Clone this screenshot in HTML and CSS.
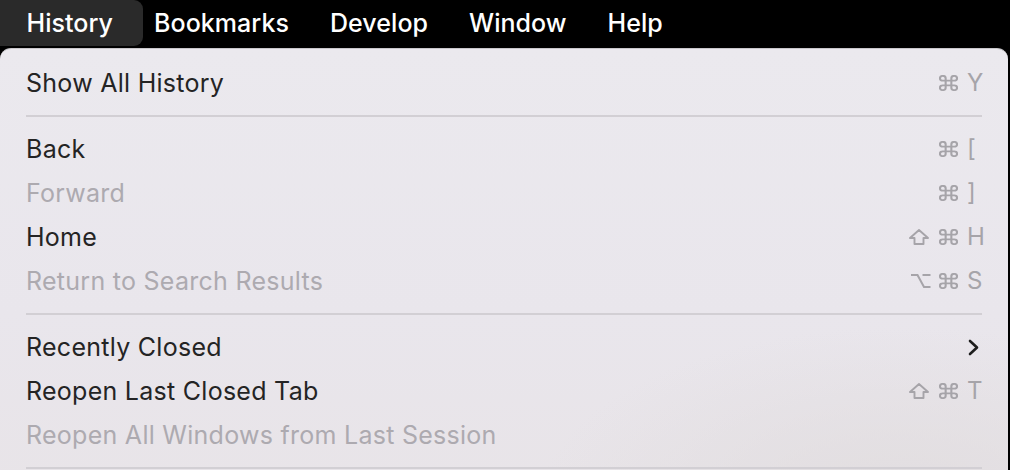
FILE: index.html
```html
<!DOCTYPE html>
<html lang="en">
<head>
<meta charset="utf-8">
<title>History menu</title>
<link rel="stylesheet" href="styles.css">
</head>
<body>
<header class="menubar">
  <span class="mb-item active">History</span>
  <span class="mb-item">Bookmarks</span>
  <span class="mb-item">Develop</span>
  <span class="mb-item">Window</span>
  <span class="mb-item">Help</span>
</header>
<div class="menu">
  <div class="row"><span class="label">Show All History</span>
    <span class="keys"><svg class="ic cmd" viewBox="2 2 20 20" preserveAspectRatio="none"><path d="M15 6v12a3 3 0 1 0 3-3H6a3 3 0 1 0 3 3V6a3 3 0 1 0-3 3h12a3 3 0 1 0-3-3"/></svg><span class="key">Y</span></span></div>
  <div class="sep"></div>
  <div class="row"><span class="label">Back</span>
    <span class="keys"><svg class="ic cmd" viewBox="2 2 20 20" preserveAspectRatio="none"><path d="M15 6v12a3 3 0 1 0 3-3H6a3 3 0 1 0 3 3V6a3 3 0 1 0-3 3h12a3 3 0 1 0-3-3"/></svg><span class="key">[</span></span></div>
  <div class="row disabled"><span class="label">Forward</span>
    <span class="keys"><svg class="ic cmd" viewBox="2 2 20 20" preserveAspectRatio="none"><path d="M15 6v12a3 3 0 1 0 3-3H6a3 3 0 1 0 3 3V6a3 3 0 1 0-3 3h12a3 3 0 1 0-3-3"/></svg><span class="key">]</span></span></div>
  <div class="row"><span class="label">Home</span>
    <span class="keys"><svg class="ic shift" viewBox="0 0 20 16"><path d="M10 1 1 9h4.5v6h9V9H19z"/></svg><svg class="ic cmd" viewBox="2 2 20 20" preserveAspectRatio="none"><path d="M15 6v12a3 3 0 1 0 3-3H6a3 3 0 1 0 3 3V6a3 3 0 1 0-3 3h12a3 3 0 1 0-3-3"/></svg><span class="key">H</span></span></div>
  <div class="row disabled"><span class="label">Return to Search Results</span>
    <span class="keys"><svg class="ic opt" viewBox="0 0 21 16"><path d="M1 2h6.5l6.5 12h6.5M12.5 2H20.5"/></svg><svg class="ic cmd" viewBox="2 2 20 20" preserveAspectRatio="none"><path d="M15 6v12a3 3 0 1 0 3-3H6a3 3 0 1 0 3 3V6a3 3 0 1 0-3 3h12a3 3 0 1 0-3-3"/></svg><span class="key">S</span></span></div>
  <div class="sep"></div>
  <div class="row"><span class="label">Recently Closed</span>
    <span class="keys"><svg class="chev" viewBox="0 0 11 17"><path d="M2 2l7 6.5-7 6.5"/></svg></span></div>
  <div class="row"><span class="label">Reopen Last Closed Tab</span>
    <span class="keys"><svg class="ic shift" viewBox="0 0 20 16"><path d="M10 1 1 9h4.5v6h9V9H19z"/></svg><svg class="ic cmd" viewBox="2 2 20 20" preserveAspectRatio="none"><path d="M15 6v12a3 3 0 1 0 3-3H6a3 3 0 1 0 3 3V6a3 3 0 1 0-3 3h12a3 3 0 1 0-3-3"/></svg><span class="key">T</span></span></div>
  <div class="row disabled"><span class="label">Reopen All Windows from Last Session</span></div>
  <div class="sep"></div>
</div>
</body>
</html>
```
FILE: styles.css
```css
* { box-sizing: border-box; }
html, body {
  margin: 0;
  height: 470px;
  overflow: hidden;
  background: #000;
  font-family: Inter, "Noto Sans", "Liberation Sans", sans-serif;
}
.menubar {
  height: 47px;
  display: flex;
  align-items: center;
  padding-left: 6px;
  background: #000;
  color: #fff;
  font-size: 25px;
  font-weight: 500;
}
.mb-item {
  position: relative;
  isolation: isolate;
  padding: 0 20.5px;
  line-height: 46px;
  height: 47px;
  letter-spacing: 0.05px;
}
.mb-item.active::before {
  content: "";
  position: absolute;
  left: -9.5px;
  right: -9.5px;
  top: 0;
  bottom: 1px;
  border-radius: 0 9px 9px 0;
  background: #2a2a2a;
  z-index: -1;
}
.menu {
  margin: 1px 2px 0 0;
  height: 440px;
  border-radius: 11px 11px 0 0;
  border-top: 1px solid #c9c7cb;
  padding: 12px 26px 0;
  background:
    radial-gradient(ellipse 520px 260px at 900px 460px, rgba(224,220,222,0.9), rgba(224,220,222,0) 70%),
    linear-gradient(180deg, #ebe9ee 0%, #e9e6ec 60%, #e8e4e8 100%);
  color: #242424;
  font-size: 25px;
}
.row {
  height: 44px;
  display: flex;
  align-items: center;
  justify-content: space-between;
}
.label { letter-spacing: 0.27px; }
.row.disabled .label { color: #adaab0; }
.keys {
  display: flex;
  align-items: center;
  color: #a6a4a9;
}
.key {
  width: 15px;
  margin-left: 9px;
  font-size: 24px;
  line-height: 1;
}
.ic {
  fill: none;
  stroke: #a6a4a9;
  stroke-linecap: round;
  stroke-linejoin: round;
}
.ic.cmd {
  width: 19px;
  height: 16px;
  stroke-width: 2.2;
}
.ic.shift {
  width: 20px;
  height: 16px;
  margin-right: 10px;
  stroke-width: 1.9;
}
.ic.opt {
  width: 21px;
  height: 16px;
  margin-right: 8px;
  stroke-width: 2;
  stroke-linecap: butt;
  stroke-linejoin: miter;
}
.chev {
  width: 11px;
  height: 17px;
  margin-right: 3px;
  fill: none;
  stroke: #1e1e1e;
  stroke-width: 2.6;
  stroke-linecap: round;
  stroke-linejoin: round;
}
.sep {
  height: 2px;
  margin: 10px 0;
  background: #d2cfd4;
}
```
